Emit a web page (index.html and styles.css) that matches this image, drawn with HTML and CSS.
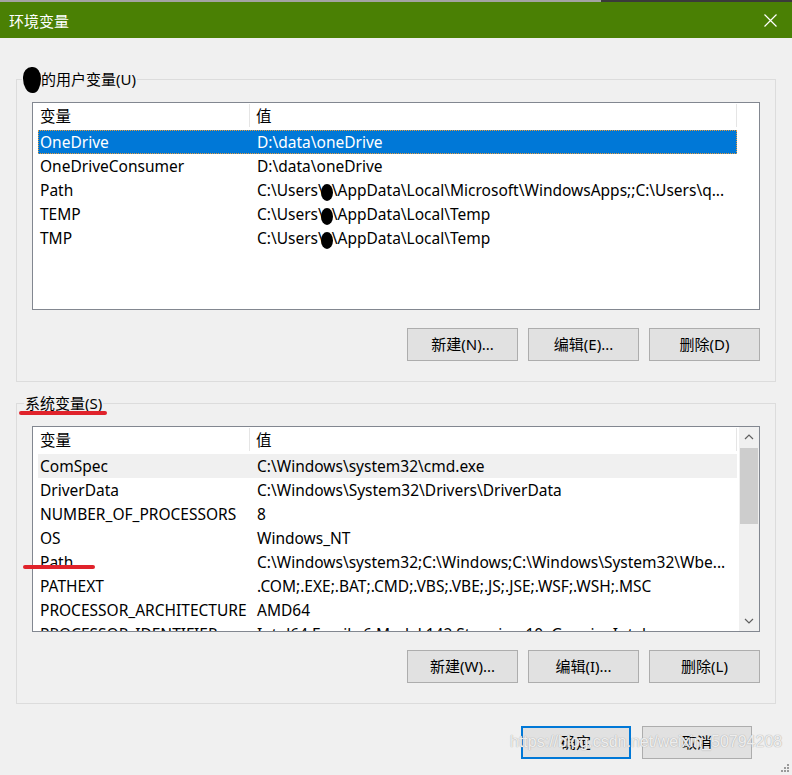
FILE: index.html
```html
<!DOCTYPE html>
<html lang="zh-CN">
<head>
    <meta charset="UTF-8">
    <title>环境变量</title>
    <link rel="stylesheet" href="styles.css">
</head>
<body>
    <div class="topline"><span class="tl-light"></span><span class="tl-dark"></span></div>

    <div class="titlebar">
        <span class="title">环境变量</span>
        <svg class="close" width="13" height="13" viewBox="0 0 13 13">
            <path d="M0.5 0.5 L12.5 12.5 M12.5 0.5 L0.5 12.5" stroke="#fff" stroke-width="1.2" fill="none"/>
        </svg>
    </div>

    <div class="content">
        <!-- User variables -->
        <fieldset class="group">
            <legend><span class="blob"></span>的用户变量(U)</legend>
            <div class="list user-list">
                <div class="list-main">
                    <div class="list-head">
                        <div class="head-name">变量</div>
                        <div class="head-val">值</div>
                    </div>
                    <div class="row selected"><div class="cell-name">OneDrive</div><div class="cell-val">D:\data\oneDrive</div></div>
                    <div class="row"><div class="cell-name">OneDriveConsumer</div><div class="cell-val">D:\data\oneDrive</div></div>
                    <div class="row"><div class="cell-name">Path</div><div class="cell-val">C:\Users\<span class="dot"></span>\AppData\Local\Microsoft\WindowsApps;;C:\Users\q...</div></div>
                    <div class="row"><div class="cell-name">TEMP</div><div class="cell-val">C:\Users\<span class="dot"></span>\AppData\Local\Temp</div></div>
                    <div class="row"><div class="cell-name">TMP</div><div class="cell-val">C:\Users\<span class="dot"></span>\AppData\Local\Temp</div></div>
                </div>
            </div>
            <div class="btns">
                <button>新建(N)...</button>
                <button>编辑(E)...</button>
                <button>删除(D)</button>
            </div>
        </fieldset>

        <!-- System variables -->
        <fieldset class="group sys">
            <legend>系统变量(S)</legend>
            <div class="list sys-list">
                <div class="list-main">
                    <div class="list-head">
                        <div class="head-name">变量</div>
                        <div class="head-val">值</div>
                    </div>
                    <div class="row focused"><div class="cell-name">ComSpec</div><div class="cell-val">C:\Windows\system32\cmd.exe</div></div>
                    <div class="row"><div class="cell-name">DriverData</div><div class="cell-val">C:\Windows\System32\Drivers\DriverData</div></div>
                    <div class="row"><div class="cell-name">NUMBER_OF_PROCESSORS</div><div class="cell-val">8</div></div>
                    <div class="row"><div class="cell-name">OS</div><div class="cell-val">Windows_NT</div></div>
                    <div class="row"><div class="cell-name">Path</div><div class="cell-val">C:\Windows\system32;C:\Windows;C:\Windows\System32\Wbe...</div></div>
                    <div class="row"><div class="cell-name">PATHEXT</div><div class="cell-val">.COM;.EXE;.BAT;.CMD;.VBS;.VBE;.JS;.JSE;.WSF;.WSH;.MSC</div></div>
                    <div class="row"><div class="cell-name">PROCESSOR_ARCHITECTURE</div><div class="cell-val">AMD64</div></div>
                    <div class="row"><div class="cell-name">PROCESSOR_IDENTIFIER</div><div class="cell-val">Intel64 Family 6 Model 142 Stepping 10, GenuineIntel</div></div>
                </div>
                <div class="scrollbar">
                    <div class="sb-arrow">
                        <svg width="10" height="6" viewBox="0 0 10 6"><path d="M1 5 L5 1 L9 5" stroke="#606060" stroke-width="1.2" fill="none"/></svg>
                    </div>
                    <div class="sb-thumb"></div>
                    <div class="sb-track"></div>
                    <div class="sb-arrow">
                        <svg width="10" height="6" viewBox="0 0 10 6"><path d="M1 1 L5 5 L9 1" stroke="#606060" stroke-width="1.2" fill="none"/></svg>
                    </div>
                </div>
            </div>
            <div class="btns">
                <button>新建(W)...</button>
                <button>编辑(I)...</button>
                <button>删除(L)</button>
            </div>
        </fieldset>

        <div class="dialog-btns">
            <button class="default">确定</button>
            <button>取消</button>
        </div>
    </div>

    <!-- annotations on the screenshot -->
    <div class="mark mark-legend"></div>
    <div class="mark mark-path"></div>
    <div class="watermark">https://blog.csdn.net/weixin_50794208</div>
    <svg class="grip" width="9" height="9" viewBox="0 0 9 9">
        <rect x="6" y="0" width="2" height="2" fill="#9a9a9a"/>
        <rect x="3" y="3" width="2" height="2" fill="#9a9a9a"/>
        <rect x="6" y="3" width="2" height="2" fill="#9a9a9a"/>
        <rect x="0" y="6" width="2" height="2" fill="#9a9a9a"/>
        <rect x="3" y="6" width="2" height="2" fill="#9a9a9a"/>
        <rect x="6" y="6" width="2" height="2" fill="#9a9a9a"/>
    </svg>
</body>
</html>
```

FILE: styles.css
```css
body {
    margin: 0;
    width: 792px;
    height: 775px;
    overflow: hidden;
    position: relative;
    background-color: #f0f0f0;
    font-family: "Noto Sans", "Noto Sans CJK SC", sans-serif;
    font-size: 15px;
    color: #000;
}

.topline {
    display: flex;
    height: 2px;
}

.tl-light {
    width: 601px;
    background-color: #a3a3a3;
}

.tl-dark {
    flex: 1;
    background-color: #3a3a3a;
}

.titlebar {
    display: flex;
    align-items: center;
    justify-content: space-between;
    height: 36px;
    padding: 0 15px 0 9px;
    background-color: #4a8004;
    color: white;
}

.title {
    font-size: 15px;
}

.close {
    display: block;
}

.content {
    padding: 31px 16px 0 16px;
}

/* Group boxes */
.group {
    margin: 0;
    padding: 0 15px 20px;
    border: 1px solid #dcdcdc;
    min-width: 0;
}

.group legend {
    margin-left: -10px;
    padding: 0 1px;
    line-height: 20px;
    height: 20px;
}

.group.sys {
    margin-top: 11px;
}

.group.sys legend {
    margin-left: -8px;
}

.blob {
    display: inline-block;
    width: 18px;
    height: 26px;
    margin: -6px 0 -4px;
    vertical-align: middle;
    background-color: #000;
    border-radius: 50% 50% 45% 55% / 40% 45% 60% 60%;
}

/* List views */
.list {
    display: flex;
    margin-top: 13px;
    border: 1px solid #828790;
    background-color: white;
    overflow: hidden;
    font-size: 15.5px;
}

.user-list {
    height: 206px;
}

.sys-list {
    height: 204px;
}

.list-main {
    width: 706px;
    overflow: hidden;
}

.list-head {
    display: flex;
    height: 27px;
    line-height: 27px;
}

.head-name {
    width: 217px;
    padding-left: 7px;
    box-sizing: border-box;
    position: relative;
}

.head-name::after {
    content: "";
    position: absolute;
    right: 0;
    top: 1px;
    bottom: 3px;
    border-right: 1px solid #e5e5e5;
}

.head-val {
    width: 487px;
    padding-left: 6px;
    box-sizing: border-box;
    border-right: 1px solid #e5e5e5;
    height: 23px;
    margin-top: 1px;
    line-height: 25px;
}

.row {
    display: flex;
    height: 24px;
    line-height: 24px;
    margin-left: 5px;
    width: 699px;
    white-space: nowrap;
}

.cell-name {
    width: 212px;
    padding-left: 2px;
    box-sizing: border-box;
    overflow: hidden;
}

.cell-val {
    width: 487px;
    padding-left: 7px;
    box-sizing: border-box;
    overflow: hidden;
}

.row.selected {
    background-color: #0078d7;
    color: white;
    outline: 1px dotted #e59a3c;
    outline-offset: -1px;
}

.row.focused {
    background-color: #f0f0f0;
}

.dot {
    display: inline-block;
    width: 12px;
    height: 17px;
    margin: 0 -1px 0 -3px;
    vertical-align: -5px;
    background-color: #000;
    border-radius: 50%;
}

/* Scrollbar */
.scrollbar {
    display: flex;
    flex-direction: column;
    width: 20px;
    margin-left: 2px;
    background-color: #f0f0f0;
}

.sb-arrow {
    display: flex;
    align-items: center;
    justify-content: center;
    height: 20px;
}

.sb-thumb {
    height: 76px;
    margin: 1px 1px 0;
    background-color: #cdcdcd;
}

.sb-track {
    flex: 1;
}

/* Buttons */
.btns {
    display: flex;
    justify-content: flex-end;
    gap: 10px;
    margin-top: 18px;
}

button {
    width: 111px;
    height: 33px;
    padding: 0 0 2px;
    background-color: #e1e1e1;
    border: 1px solid #adadad;
    font-family: "Noto Sans", "Noto Sans CJK SC", sans-serif;
    font-size: 15px;
    color: #000;
}

.dialog-btns {
    display: flex;
    justify-content: flex-end;
    gap: 11px;
    margin: 22px 24px 0 0;
}

.dialog-btns button {
    width: 110px;
}

.dialog-btns .default {
    border: 2px solid #0078d7;
}

/* Overlay annotations */
.mark {
    position: absolute;
    height: 4px;
    background-color: #e0232b;
    border-radius: 2px;
}

.mark-legend {
    left: 19px;
    top: 411px;
    width: 88px;
}

.mark-path {
    left: 23px;
    top: 565px;
    width: 72px;
}

.watermark {
    position: absolute;
    left: 510px;
    top: 733px;
    font-family: "Liberation Sans", sans-serif;
    font-size: 16px;
    color: rgba(255, 255, 255, 0.8);
    text-shadow: 0 0 1px #b0b0b0, 0 0 1px #b0b0b0;
}

.grip {
    position: absolute;
    right: 2px;
    bottom: 2px;
}
```
